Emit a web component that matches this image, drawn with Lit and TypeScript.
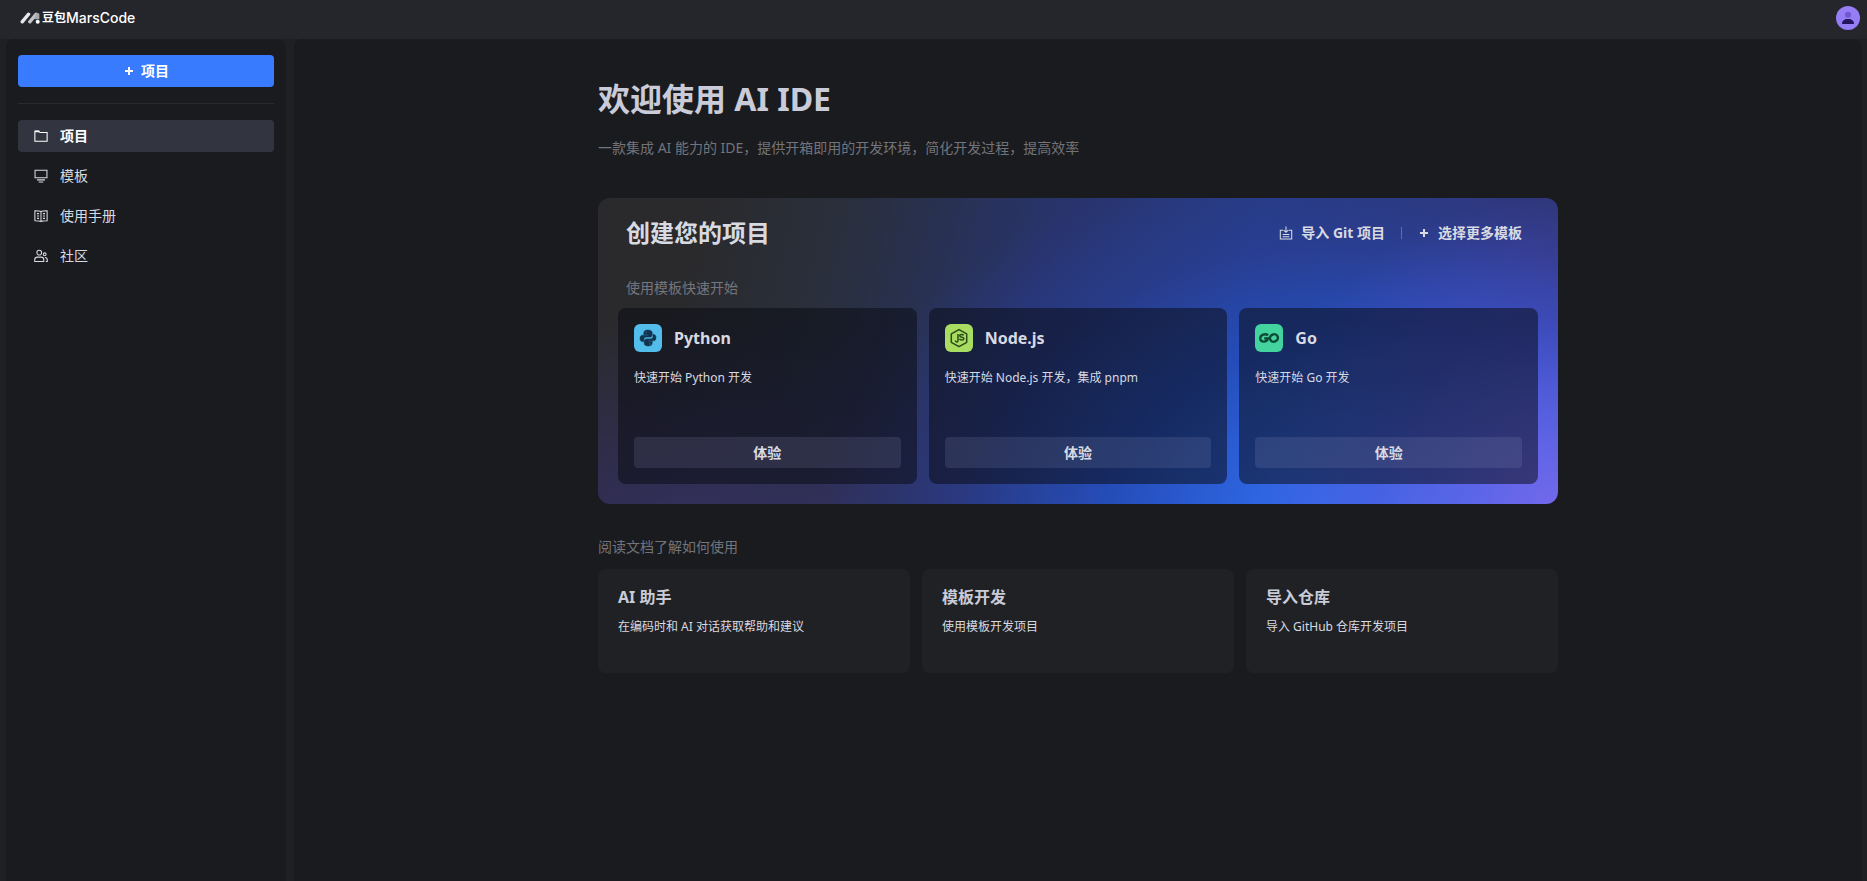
import { LitElement, html, css, svg } from "lit";
import { customElement, state } from "lit/decorators.js";

const icons = {
  folder: svg`<path d="M1 2.500h4.600l1.200 1.500H15v10H1z"/><path d="M1 2.700h5" stroke-width="2"/>`,
  template: svg`<path d="M1.200 1.500h13.600v8.600H1.200zM3.400 12.400h9.200M5.400 14.800h5.200"/>`,
  book: svg`<path d="M8 3v11.400M8 3C7 2.300 6 2 1 2v11.400c5 0 6 .3 7 1 1-.7 2-1 7-1V2C10 2 9 2.300 8 3z"/><path d="M3.400 5.300h2.400M3.400 8h2.400M10.200 5.300h2.400M10.200 8h2.400M3.400 10.700h2.400M10.200 10.700h2.400"/>`,
  people: svg`<circle cx="6" cy="4.200" r="2.700"/><path d="M.8 14.300v-1.800c0-2 1.600-3.200 3.200-3.200h4c1.600 0 3.200 1.200 3.200 3.200v1.800z"/><circle cx="12.200" cy="6" r="1.600"/><path d="M12.500 9.800c1.700.1 2.700 1.100 2.700 2.700v1.700h-1.700"/>`,
  import: svg`<path d="M4.800 4.800H1.500v10h13v-10h-3.300M8 .6v6M5.400 4.600 8 7.200l2.600-2.600M4.200 9.600h7.600M4.200 12.200h7.600"/>`,
};

const logos = {
  python: svg`<rect width="28" height="28" rx="6" fill="#52bdeb"/>
    <g fill="#12344f" stroke="#12344f" stroke-width=".5"><path d="M13.900 6c-3 0-4.100 1.200-4.100 2.800v1.900h4.400v.5H8.300C6.700 11.200 6 12.700 6 14.300c0 1.800.8 3.300 2.300 3.300h1.500v-2c0-1.700 1.200-2.500 2.700-2.500h3.600c1.200 0 2.100-.9 2.100-2.100V8.800C18.200 7 16.500 6 13.900 6zm-1.800 1.400a.7.7 0 1 1 0 1.400.7.7 0 0 1 0-1.400z"/>
    <path d="M14.100 22c3 0 4.100-1.200 4.100-2.800v-1.900h-4.400v-.5h5.900c1.600 0 2.300-1.500 2.300-3.100 0-1.800-.8-3.300-2.300-3.300h-.7v2c0 1.700-1.300 2.500-2.800 2.500h-3.800c-1.200 0-2.200.9-2.200 2.100v2.200c0 1.800 1.300 2.800 3.900 2.800zm1.800-1.400a.7.7 0 1 1 0-1.400.7.7 0 0 1 0 1.400z"/></g>`,
  node: svg`<rect width="28" height="28" rx="6" fill="#a9dd62"/>
    <g fill="none" stroke="#2c4a17" stroke-width="1.500" stroke-linejoin="round"><path d="M14 5.600l7.700 4.300v8.400L14 22.600l-7.700-4.300V9.900z"/><path d="M13 10v6.800c0 1.500-2.600 1.500-2.600-.2M18.600 11.400c-.6-1.300-3.900-1.300-3.900.4 0 2 4.200.8 4.200 2.900 0 1.800-3.800 1.800-4.400.1"/></g>`,
  go: svg`<rect width="28" height="28" rx="6" fill="#42d39f"/>
    <g fill="none" stroke="#0c4a35" stroke-width="2.400"><path d="M13 11.400c-2.400-2.300-7.600-.7-7.800 2.900-.2 4.300 6.700 4.400 7.800.1H9.200"/><ellipse cx="18.900" cy="14" rx="4" ry="3.700" transform="rotate(-20 18.900 14)"/></g>`,
};

interface NavItem { label: string; icon: keyof typeof icons; }
interface Template { name: string; text: string; logo: keyof typeof logos; }

@customElement("app-root")
export class AppRoot extends LitElement {
  @state() private active = 0;

  private nav: NavItem[] = [
    { label: "项目", icon: "folder" },
    { label: "模板", icon: "template" },
    { label: "使用手册", icon: "book" },
    { label: "社区", icon: "people" },
  ];

  private templates: Template[] = [
    { name: "Python", text: "快速开始 Python 开发", logo: "python" },
    { name: "Node.js", text: "快速开始 Node.js 开发，集成 pnpm", logo: "node" },
    { name: "Go", text: "快速开始 Go 开发", logo: "go" },
  ];

  private docs = [
    { title: "AI 助手", text: "在编码时和 AI 对话获取帮助和建议" },
    { title: "模板开发", text: "使用模板开发项目" },
    { title: "导入仓库", text: "导入 GitHub 仓库开发项目" },
  ];

  static styles = css`
    :host {
      display: flex;
      flex-direction: column;
      min-height: 100vh;
      background: #1f2023;
      color: #d8dae2;
      font: 14px/20px "Noto Sans", "Noto Sans CJK SC", sans-serif;
    }
    * { box-sizing: border-box; }
    h1, h2, h3, p { margin: 0; }
    a { color: inherit; text-decoration: none; }
    button { border: 0; font: inherit; color: inherit; cursor: pointer; }
    svg { display: block; flex: none; }
    .line { fill: none; stroke: currentColor; stroke-width: 1.200; }

    .top {
      display: flex;
      align-items: center;
      justify-content: space-between;
      height: 39px;
      padding: 0 7px 4px 20px;
      background: #25262b;
    }
    .brand {
      display: flex;
      align-items: center;
      gap: 2px;
      color: #fff;
      font: 500 14px/20px Inter, "Noto Sans CJK SC", sans-serif;
    }
    .brand-cn { font-size: 12px; font-weight: 700; }
    .brand-name { display: flex; align-items: center; }
    .avatar { padding: 0; background: none; border-radius: 50%; }

    .body { display: flex; flex: 1; gap: 8px; padding: 0 5px 0 6px; }
    .side {
      width: 280px;
      flex: none;
      padding: 16px 12px;
      background: #1a1b1f;
      border-radius: 8px 8px 0 0;
    }
    .create {
      display: flex;
      align-items: center;
      justify-content: center;
      gap: 6px;
      width: 100%;
      height: 32px;
      border-radius: 4px;
      background: #387bff;
      color: #fff;
      font-weight: 700;
    }
    .rule { height: 1px; margin: 16px 0; background: #2a2b2f; }
    .nav { display: flex; flex-direction: column; gap: 8px; }
    .item {
      display: flex;
      align-items: center;
      gap: 12px;
      height: 32px;
      padding: 0 16px;
      border-radius: 4px;
    }
    .item.on { background: #32343f; color: #fff; font-weight: 700; }

    .main {
      flex: 1;
      padding: 36px 24px;
      background: #1a1b1f;
      border-radius: 8px 8px 0 0;
    }
    .page { max-width: 960px; margin: 0 auto; }
    h1 { font-size: 32px; line-height: 48px; color: #c9ccd8; }
    .muted { color: #72747b; }
    .lead { margin-top: 15px; }
    .hero {
      margin-top: 40px;
      padding: 16px 20px 20px;
      border-radius: 12px;
      background:
        radial-gradient(ellipse 32% 105% at 100% 104%, #7669ec 0%, rgba(106, 100, 232, 0.75) 28%, rgba(92, 82, 215, 0.38) 60%, rgba(80, 70, 190, 0) 100%),
        radial-gradient(ellipse 60% 125% at 83% 106%, #3a70f0 0%, rgba(46, 102, 228, 0.97) 25%, rgba(36, 82, 200, 0.8) 50%, rgba(40, 68, 170, 0.4) 75%, rgba(40, 56, 120, 0) 100%),
        radial-gradient(ellipse 45% 75% at 10% 112%, #332f60 0%, rgba(51, 47, 96, 0) 100%),
        linear-gradient(105deg, #2a2a2c 10%, #292f3c 24%, #28336a 44%, #283a80 64%, #34326a 98%);
    }
    .hero-head {
      display: flex;
      align-items: center;
      justify-content: space-between;
      padding: 0 16px 0 8px;
    }
    h2 { font-size: 24px; line-height: 38px; }
    .actions { display: flex; align-items: center; gap: 16px; font-weight: 700; }
    .action { display: flex; align-items: center; gap: 8px; }
    .bar { width: 1px; height: 12px; background: rgba(255, 255, 255, 0.25); }
    .hero-sub { padding: 26px 8px 10px; color: #74767f; }
    .grid { display: grid; grid-template-columns: repeat(3, 1fr); gap: 12px; }
    .tpl {
      display: flex;
      flex-direction: column;
      height: 176px;
      padding: 16px;
      border-radius: 8px;
      background: rgba(10, 12, 18, 0.53);
    }
    .tpl-head { display: flex; align-items: center; gap: 12px; }
    h3 { font-size: 16px; line-height: 24px; }
    .small { font-size: 12px; line-height: 20px; }
    .tpl .small { margin-top: 16px; }
    .try {
      height: 31px;
      margin-top: auto;
      border-radius: 4px;
      background: rgba(160, 170, 210, 0.15);
      font-weight: 700;
    }
    .doc-label { margin: 33px 0 12px; }
    .doc {
      display: block;
      height: 104px;
      padding: 16px 20px;
      border-radius: 8px;
      background: #202124;
    }
    .doc h3 { color: #c9ccd8; }
    .doc .small { margin-top: 8px; }
  `;

  private icon(name: keyof typeof icons) {
    return html`<svg class="line" width="14" height="14" viewBox="0 0 16 16" aria-hidden="true">${icons[name]}</svg>`;
  }

  private plus() {
    return html`<svg width="12" height="12" viewBox="0 0 12 12" aria-hidden="true"><path d="M6 2v8M2 6h8" stroke="currentColor" stroke-width="2"/></svg>`;
  }

  render() {
    return html`
      <header class="top">
        <a class="brand" href="#">
          <svg width="20" height="12" viewBox="0 0 20 12" aria-hidden="true">
            <g stroke-linecap="round" stroke-width="3.400">
              <path d="M2.200 9.800 8.600 2.200" stroke="#e8e8ea"/>
              <path d="M9.800 9.800 16.200 2.200" stroke="#c4c4c8"/>
            </g>
            <path d="M15.600 1.400q3.800-1.400 3.800 1.400v4.400h-4.600z" fill="#a9a9ae"/>
            <circle cx="17.700" cy="9.800" r="2" fill="#fff"/>
          </svg>
          <span class="brand-name"><span class="brand-cn">豆包</span>MarsCode</span>
        </a>
        <button class="avatar" aria-label="账户">
          <svg width="24" height="24" viewBox="0 0 24 24" aria-hidden="true">
            <circle cx="12" cy="12" r="12" fill="#957df5"/>
            <circle cx="12" cy="8.800" r="3" fill="#7357d0"/>
            <path d="M6 18c0-3.400 2.400-5 6-5s6 1.600 6 5z" fill="#24145e"/>
          </svg>
        </button>
      </header>
      <div class="body">
        <aside class="side">
          <button class="create">${this.plus()}<span>项目</span></button>
          <div class="rule"></div>
          <nav class="nav">
            ${this.nav.map((n, i) => html`
              <a class="item ${i === this.active ? "on" : ""}" href="#" @click=${() => (this.active = i)}>
                ${this.icon(n.icon)}<span>${n.label}</span>
              </a>`)}
          </nav>
        </aside>
        <main class="main">
          <div class="page">
            <h1>欢迎使用 AI IDE</h1>
            <p class="lead muted">一款集成 AI 能力的 IDE，提供开箱即用的开发环境，简化开发过程，提高效率</p>
            <section class="hero">
              <div class="hero-head">
                <h2>创建您的项目</h2>
                <div class="actions">
                  <a class="action" href="#">${this.icon("import")}<span>导入 Git 项目</span></a>
                  <span class="bar"></span>
                  <a class="action" href="#">${this.plus()}<span>选择更多模板</span></a>
                </div>
              </div>
              <p class="hero-sub">使用模板快速开始</p>
              <div class="grid">
                ${this.templates.map((t) => html`
                  <article class="tpl">
                    <div class="tpl-head">
                      <svg width="28" height="28" viewBox="0 0 28 28" aria-hidden="true">${logos[t.logo]}</svg>
                      <h3>${t.name}</h3>
                    </div>
                    <p class="small">${t.text}</p>
                    <button class="try">体验</button>
                  </article>`)}
              </div>
            </section>
            <p class="doc-label muted">阅读文档了解如何使用</p>
            <div class="grid">
              ${this.docs.map((d) => html`
                <a class="doc" href="#">
                  <h3>${d.title}</h3>
                  <p class="small">${d.text}</p>
                </a>`)}
            </div>
          </div>
        </main>
      </div>
    `;
  }
}
